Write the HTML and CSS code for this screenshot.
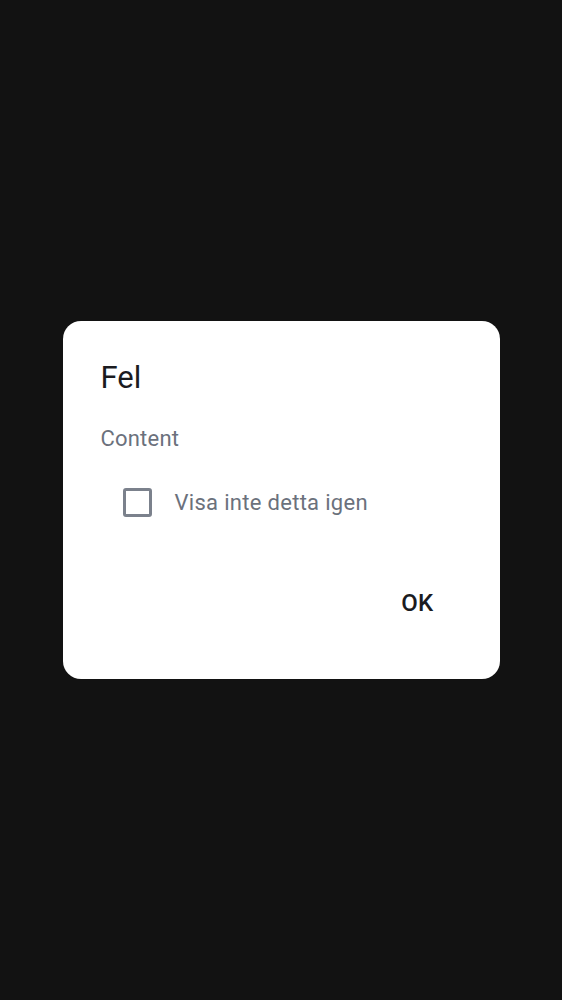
FILE: index.html
```html
<!DOCTYPE html>
<html lang="sv">
<head>
<meta charset="utf-8">
<link rel="stylesheet" href="styles.css">
</head>
<body>
<div class="screen">
  <div class="dialog">
    <h1 class="title">Fel</h1>
    <p class="content">Content</p>
    <label class="check-row">
      <span class="checkbox"></span>
      <span class="check-label">Visa inte detta igen</span>
    </label>
    <div class="actions">
      <button class="btn">OK</button>
    </div>
  </div>
</div>
</body>
</html>
```
FILE: styles.css
```css
html, body {
  margin: 0;
  padding: 0;
  background: #121212;
}
.screen {
  width: 562px;
  height: 1000px;
  display: flex;
  align-items: center;
  justify-content: center;
  font-family: Roboto, "Liberation Sans", sans-serif;
}
.dialog {
  width: 437px;
  height: 358px;
  box-sizing: border-box;
  background: #ffffff;
  border-radius: 18px;
  padding: 37px 0 0 38px;
  display: flex;
  flex-direction: column;
}
.title {
  margin: 0;
  font-size: 31px;
  line-height: 40px;
  font-weight: 400;
  color: #1b1b1f;
}
.content {
  margin: 26px 0 0 0;
  font-size: 22px;
  line-height: 30px;
  color: #6b717c;
  letter-spacing: 0.2px;
}
.check-row {
  margin: 24px 0 0 22px;
  height: 48px;
  display: flex;
  align-items: center;
  gap: 23px;
}
.checkbox {
  width: 29px;
  height: 29px;
  box-sizing: border-box;
  border: 3px solid #7b818c;
  border-radius: 3px;
}
.check-label {
  font-size: 22px;
  color: #6b717c;
  letter-spacing: 0.3px;
}
.actions {
  margin-top: 53px;
  display: flex;
  justify-content: flex-end;
  padding-right: 50px;
}
.btn {
  height: 48px;
  padding: 0 16px;
  border: none;
  background: transparent;
  font-family: Roboto, "Liberation Sans", sans-serif;
  font-size: 24px;
  font-weight: 500;
  color: #1b1b1f;
  letter-spacing: 0.3px;
}
```
